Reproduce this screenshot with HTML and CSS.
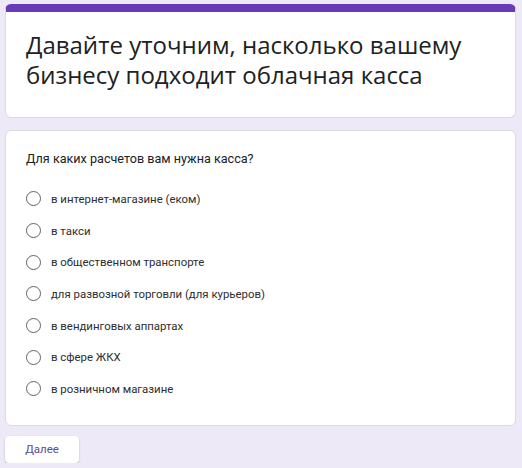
FILE: index.html
```html
<!DOCTYPE html>
<html lang="ru">
<head>
  <meta charset="UTF-8">
  <title>Облачная касса</title>
  <link rel="stylesheet" href="styles.css">
</head>
<body>
  <div class="form">
    <div class="card header-card">
      <h1>Давайте уточним, насколько вашему бизнесу подходит облачная касса</h1>
    </div>

    <div class="card">
      <div class="question">Для каких расчетов вам нужна касса?</div>
      <div class="options">
        <label class="option"><span class="radio"></span>в интернет-магазине (еком)</label>
        <label class="option"><span class="radio"></span>в такси</label>
        <label class="option"><span class="radio"></span>в общественном транспорте</label>
        <label class="option"><span class="radio"></span>для развозной торговли (для курьеров)</label>
        <label class="option"><span class="radio"></span>в вендинговых аппартах</label>
        <label class="option"><span class="radio"></span>в сфере ЖКХ</label>
        <label class="option"><span class="radio"></span>в розничном магазине</label>
      </div>
    </div>

    <button class="next">Далее</button>
  </div>
</body>
</html>
```

FILE: styles.css
```css
body {
  margin: 0;
  background: #ede9f6;
  font-family: Roboto, Arial, sans-serif;
  color: #202124;
}
.form {
  padding: 4px 6px 0 5px;
}
.card {
  background: white;
  border: 1px solid #dadce0;
  border-radius: 6px;
  padding: 18px 20px 20px 20px;
  margin-bottom: 10px;
}
.header-card {
  border-top: 8px solid #673ab7;
  padding: 18px 20px 27px 20px;
  margin-bottom: 12px;
}
h1 {
  margin: 0;
  font-family: "Open Sans", sans-serif;
  font-weight: normal;
  font-size: 24px;
  line-height: 30px;
  color: #202124;
}
.question {
  font-size: 12.6px;
  line-height: 20px;
  margin-bottom: 14px;
}
.option {
  display: flex;
  align-items: center;
  height: 31.7px;
  font-size: 11.4px;
  color: #2d2e30;
  gap: 10px;
}
.radio {
  width: 13px;
  height: 13px;
  border: 1.5px solid #5f6368;
  border-radius: 50%;
}
.next {
  padding: 0;
  width: 74px;
  height: 27px;
  background: white;
  border: none;
  border-radius: 4px;
  box-shadow: 0 1px 2px rgba(60,64,67,0.3);
  color: #5b4a9a;
  font-family: Roboto, Arial, sans-serif;
  font-size: 11.5px;
}
```
